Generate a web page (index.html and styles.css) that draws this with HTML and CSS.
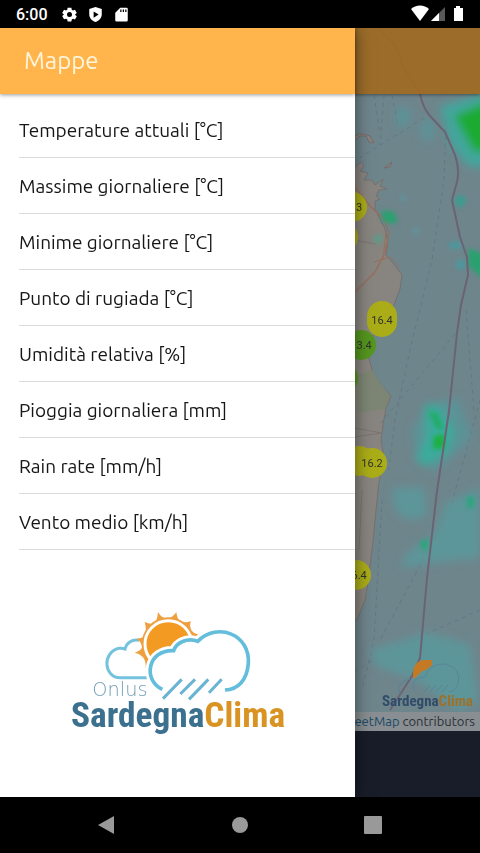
FILE: index.html
```html
<!DOCTYPE html>
<html lang="it">
<head>
  <meta charset="UTF-8">
  <meta name="viewport" content="width=device-width, initial-scale=1.0">
  <title>Mappe</title>
  <link rel="stylesheet" href="styles.css">
</head>
<body>
  <!-- Status bar -->
  <header class="status-bar">
    <span class="clock">6:00</span>
    <svg class="status-icon" viewBox="0 0 24 24"><path d="M9 1h6l.6 3.200 2 1.200 3.100-1.100 3 5.200-2.500 2.100v1l2.500 2.100-3 5.200-3.100-1.100-2 1.200L15 23H9l-.6-3.200-2-1.200-3.100 1.100-3-5.200 2.500-2.100v-1L.3 9.500l3-5.200 3.100 1.100 2-1.200zM12 8a4 4 0 1 0 0 8 4 4 0 0 0 0-8z" fill-rule="evenodd"/></svg>
    <svg class="status-icon" viewBox="0 0 24 24"><path d="M12 0l10 3v9c0 5-4 10-10 12C6 22 2 17 2 12V3zM9 7v10l8-5z" fill-rule="evenodd"/></svg>
    <svg class="status-icon" viewBox="0 0 24 24"><path d="M10 1h10a2 2 0 0 1 2 2v18a2 2 0 0 1-2 2H4a2 2 0 0 1-2-2V9zM10 4v4h2V4zm4 0v4h2V4zm4 0v4h2V4z" fill-rule="evenodd"/></svg>
    <div class="status-right">
      <svg class="signal-icons" viewBox="0 0 54 18">
        <path d="M1 4a13 13 0 0 1 18 0l-9 12z"/>
        <path d="M21 16L35 2v14z" opacity="0.35"/>
        <path d="M21 16l8-8v8z"/>
        <path d="M46 1h4v2h3v13h-9V3h2z"/>
      </svg>
    </div>
  </header>

  <div class="app">
    <!-- Map page -->
    <main class="map-page">
      <div class="map">
        <svg class="map-art" viewBox="0 28 480 703" preserveAspectRatio="xMaxYMin slice">
          <defs>
            <filter id="soft" x="-30%" y="-30%" width="160%" height="160%"><feGaussianBlur stdDeviation="4"/></filter>
            <filter id="haze" x="-30%" y="-30%" width="160%" height="160%"><feGaussianBlur stdDeviation="2"/></filter>
          </defs>
          <rect y="28" width="480" height="703" fill="#6f858c"/>
          <!-- East coast -->
          <path fill="#88847f" stroke="#75706f" d="M340 168l14 0 7-6 3 4-4 5 8 2-4 7 8 0 3 5 8-6-3 7 7 3-8 1-3 6 4 3-5 2 0 8 5 10 5 10 3 14-2 12 8 9 8 11-2 14-6 16-10 14-10 15-5 11 0 14 4 14 8 12 10 11-5 12-3 17-2 15 3 18-5 24-3 28-3 32-5 40-3 18-8 20H340z"/>
          <path fill="#88847f" stroke="#756b6c" d="M354 141l6-5 6 0 3 6 5 1-4-7-6-2-5 0-5 3zM384 168l8-6-2 5z"/>
          <path fill="#7d8674" d="M356 376l16-6 8 13 10 13-5 13-27 4z"/>
          <g fill="none" stroke="#96705f">
            <path stroke-width="1.500" d="M354 186l16 20 14 13 5 14-4 20-10 19-20 20"/>
            <path d="M386 232l-3 28M374 262l16-5 10 10"/>
          </g>
          <path d="M354 428l28 5-28 4M362 490l-3 60M354 240l22 4" fill="none" stroke="#7b7672"/>
          <g fill="none" stroke="#627785" stroke-dasharray="4 4">
            <path d="M374 95l6 40M384 95l-4 50M392 95l6 30M424 118L356 160"/>
            <path d="M446 120l-2 60-12 80-22 90-15 70-7 55"/>
            <path d="M455 334l-75 90M466 310l8 100M480 400l-30 110-70 130"/>
            <path d="M382 500l-8 140-12 50M480 610l-90 40-36 22"/>
          </g>
          <!-- Rain radar -->
          <g filter="url(#soft)">
            <path fill="#43a69d" d="M440 106l50-14v76l-22-2-18-22z"/>
            <path fill="#1caa30" d="M454 116l36-16v52l-16 0z"/>
            <path fill="#51999c" opacity=".7" d="M396 108h14v18h-14zM421 120h13v20h-13zM412 430l18-26 28-6 14 38-12 14-24 21-20-10z"/>
            <path fill="#3bac9c" d="M424 404l16 2 14 26-6 20-22 14-10-6 10-22z"/>
            <path fill="#579a9e" opacity=".8" d="M392 488l32-1 3 30-20 3-12-10zM446 502l34-14v70l-38 4-42 6 8-16 26-18zM370 650l34-10 20-8 46 12 8 56-18 12-44-32-40-14z"/>
          </g>
          <g filter="url(#haze)">
            <path fill="#2ba06f" d="M382 210l12 2 4 10-8 2-8-4zM468 248l16 6v26l-16-14z"/>
            <circle cx="460" cy="201" r="6" fill="#3f9a90"/>
            <circle cx="378" cy="239" r="5" fill="#649887"/>
            <path fill="#22ac66" d="M428 410l10 4 6 16-8-2z"/>
            <path fill="#1cb043" d="M434 436l10-2 1 14-12 1z"/>
            <path fill="#2ba67a" d="M467 496l8 2-2 10-6 0zM421 540h7v9l-7 1z"/>
            <path fill="#4d979d" d="M449 242h13v7h-13zM456 260h9v9h-9z"/>
            <path fill="#62919a" d="M400 195h6v6h-6zM412 228h8v6h-8z"/>
          </g>
          <path fill="none" stroke="#6b6374" stroke-width="2" stroke-linejoin="round" d="M378 28l18 18 9 24 15 24q3 14 10 22l15 16 10 23q5 15 2 27l-5 18 8 37 7 20 1 18-7 30-4 28-8 78-12 80-10 87-7 80-8 18-22 34"/>
          <!-- Watermark -->
          <path fill="#c47a25" d="M413 678q-1-17 11-18l8 0 0 5q-6 6-10 6l-7 7z"/>
          <path fill="none" stroke="#5a8397" d="M400 694q-5-12 10-15M415 691q-6-14 10-14 4-14 20-13 17 4 13 20-3 7-9 8M424 692l6-7M430 692l6-7M436 692l6-7M442 692l6-7"/>
          <text x="382" y="706" class="watermark"><tspan fill="#314c69">Sardegna</tspan><tspan fill="#9e712a">Clima</tspan></text>
        </svg>
        <span class="pin pin-lugodoro">3</span>
        <span class="pin pin-coast"></span>
        <span class="pin pin-orosei">16.4</span>
        <span class="pin pin-green pin-nuoro">13.4</span>
        <span class="pin pin-green pin-inland"></span>
        <span class="pin pin-ogliastra"></span>
        <span class="pin pin-tortoli">16.2</span>
        <span class="pin pin-muravera">16.4</span>
        <div class="attribution">© <a href="#">OpenStreetMap</a> contributors</div>
      </div>
      <div class="toolbar"></div>
      <div class="tab-bar"></div>
    </main>

    <!-- Side menu -->
    <aside class="drawer">
      <h1 class="drawer-title">Mappe</h1>
      <nav class="menu">
        <a href="#" class="menu-item">Temperature attuali [°C]</a>
        <a href="#" class="menu-item">Massime giornaliere [°C]</a>
        <a href="#" class="menu-item">Minime giornaliere [°C]</a>
        <a href="#" class="menu-item">Punto di rugiada [°C]</a>
        <a href="#" class="menu-item">Umidità relativa [%]</a>
        <a href="#" class="menu-item">Pioggia giornaliera [mm]</a>
        <a href="#" class="menu-item">Rain rate [mm/h]</a>
        <a href="#" class="menu-item">Vento medio [km/h]</a>
      </nav>
      <svg class="logo" viewBox="-9 30 720 390">
        <!-- Clouds and sun -->
        <path d="M258 233H178c-50 0-56-76-4-88 8-1 12 0 18 2 4-18 20-30 42-26" fill="none" stroke="#74c2dd" stroke-width="9"/>
        <path fill="#ee9f40" d="M291 36q10 18 28 20 18-4 27-20 2 20 12 29 14 4 32-1-6 14 2 28 8 10 20 12l-70 40-88 60q2-18-8-32-8-10-25-14 20-6 22-16 0-14-16-26 20-2 26-12 4-16-2-38 16 8 28 4 10-8 12-34z"/>
        <circle cx="322" cy="132" r="80" fill="#ee9f40"/>
        <circle cx="322" cy="132" r="70" fill="#f39a23" stroke="#fff" stroke-width="9"/>
        <path d="M304 268c-60-28-44-120 34-116 8-24 40-40 72-28 60-60 158-20 152 66-4 50-30 78-70 80z" fill="#fff" stroke="#fff" stroke-width="28"/>
        <path d="M304 268c-60-28-44-120 34-116 8-24 40-40 72-28 60-60 158-20 152 66-4 50-30 78-70 80" fill="none" stroke="#63bddb" stroke-width="11"/>
        <path d="M362 238l-56 58M402 238l-44 44M442 238l-58 60M482 238l-38 40" fill="none" stroke="#69b4d2" stroke-width="9"/>
        <text x="94" y="289" class="logo-small">Onlus</text>
        <text x="30" y="380" class="logo-name"><tspan fill="#3b708f">Sardegna</tspan><tspan fill="#d99323">Clima</tspan></text>
      </svg>
    </aside>
  </div>

  <!-- System navigation -->
  <footer class="system-nav">
    <button type="button" class="nav-button" aria-label="Indietro"><svg viewBox="0 0 20 20"><path d="M17 1v18L1 10z"/></svg></button>
    <button type="button" class="nav-button" aria-label="Home"><svg viewBox="0 0 20 20"><circle cx="10" cy="10" r="8"/></svg></button>
    <button type="button" class="nav-button" aria-label="Recenti"><svg viewBox="0 0 20 20"><rect x="1" y="1" width="18" height="18" rx="1"/></svg></button>
  </footer>
</body>
</html>
```

FILE: styles.css
```css
* {
  box-sizing: border-box;
}

body {
  margin: 0;
  height: 100vh;
  display: flex;
  flex-direction: column;
  background-color: #000;
  font-family: Ubuntu, 'Noto Sans', sans-serif;
  overflow: hidden;
}

/* Status bar */
.status-bar {
  height: 28px;
  display: flex;
  align-items: center;
  gap: 11px;
  padding: 0 16px;
  color: #fff;
}

.clock {
  font-family: Roboto, sans-serif;
  font-size: 16px;
  font-weight: 500;
  margin-right: 3px;
}

.status-icon {
  width: 15px;
  height: 15px;
  fill: #fff;
}

.status-right {
  margin-left: auto;
  display: flex;
}

.signal-icons {
  width: 54px;
  height: 18px;
  fill: #fff;
}

/* App area */
.app {
  flex: 1;
  position: relative;
  min-height: 0;
  overflow: hidden;
}

.map-page {
  height: 100%;
  display: flex;
  flex-direction: column;
}

.toolbar {
  position: absolute;
  top: 0;
  left: 0;
  right: 0;
  height: 66px;
  background-color: rgba(163, 106, 28, 0.88);
  box-shadow: 0 1px 3px rgba(0, 0, 0, 0.4);
}

.map {
  flex: 1;
  position: relative;
  min-height: 0;
  overflow: hidden;
}

.map-art {
  display: block;
  width: 100%;
  height: 100%;
}

.watermark {
  font-family: 'Liberation Sans Narrow', 'Roboto Condensed', Roboto, sans-serif;
  font-size: 15px;
  font-weight: bold;
}

.tab-bar {
  height: 66px;
  background-color: #181d29;
}

/* Map pins */
.pin {
  position: absolute;
  width: 30px;
  height: 30px;
  border-radius: 15px;
  background-color: #abad18;
  color: #30332b;
  font-family: Roboto, sans-serif;
  font-size: 11px;
  line-height: 32px;
  text-align: center;
}

.pin-green {
  background-color: #55961f;
}

.pin-lugodoro {
  top: 164px;
  right: 113px;
  padding-left: 14px;
}

.pin-coast {
  top: 194px;
  right: 122px;
}

.pin-orosei {
  top: 273px;
  right: 83px;
  height: 36px;
  line-height: 40px;
}

.pin-nuoro {
  top: 302px;
  right: 104px;
}

.pin-inland {
  top: 335px;
  right: 122px;
}

.pin-ogliastra {
  top: 418px;
  right: 106px;
}

.pin-tortoli {
  top: 420px;
  right: 93px;
}

.pin-muravera {
  top: 532px;
  right: 109px;
}

.attribution {
  position: absolute;
  right: 0;
  bottom: 0;
  padding: 0 5px;
  background-color: #888e91;
  color: #2d3035;
  font-size: 13px;
  line-height: 19px;
}

.attribution a {
  color: #1b4a66;
  text-decoration: none;
}

/* Side menu */
.drawer {
  position: absolute;
  top: 0;
  bottom: 0;
  left: 0;
  width: 74%;
  background-color: #fff;
  box-shadow: 0 0 16px rgba(0, 0, 0, 0.5);
}

.drawer-title {
  height: 66px;
  margin: 0;
  padding: 0 24px;
  background-color: #ffb44c;
  box-shadow: 0 1px 4px rgba(0, 0, 0, 0.4);
  color: #fff5dc;
  font-size: 24px;
  font-weight: normal;
  line-height: 66px;
}

.menu {
  padding: 8px 0 0 19px;
}

.menu-item {
  display: block;
  height: 56px;
  border-bottom: 1px solid #dcdcdc;
  color: #161616;
  font-size: 19px;
  line-height: 56px;
  text-decoration: none;
}

.logo {
  display: block;
  width: 240px;
  height: 130px;
  margin: 60px auto 0;
}

.logo-small {
  font-family: 'DejaVu Sans', sans-serif;
  font-size: 58px;
  font-weight: 200;
  fill: #6f9db3;
}

.logo-name {
  font-family: 'Liberation Sans Narrow', 'Roboto Condensed', Roboto, sans-serif;
  font-size: 106px;
  font-weight: bold;
}

/* System navigation */
.system-nav {
  height: 56px;
  display: flex;
  justify-content: space-around;
  align-items: center;
  padding: 0 40px;
}

.nav-button {
  width: 20px;
  height: 20px;
  padding: 0;
  border: 0;
  background: none;
}

.nav-button svg {
  display: block;
  width: 20px;
  height: 20px;
  fill: #999;
}
```
